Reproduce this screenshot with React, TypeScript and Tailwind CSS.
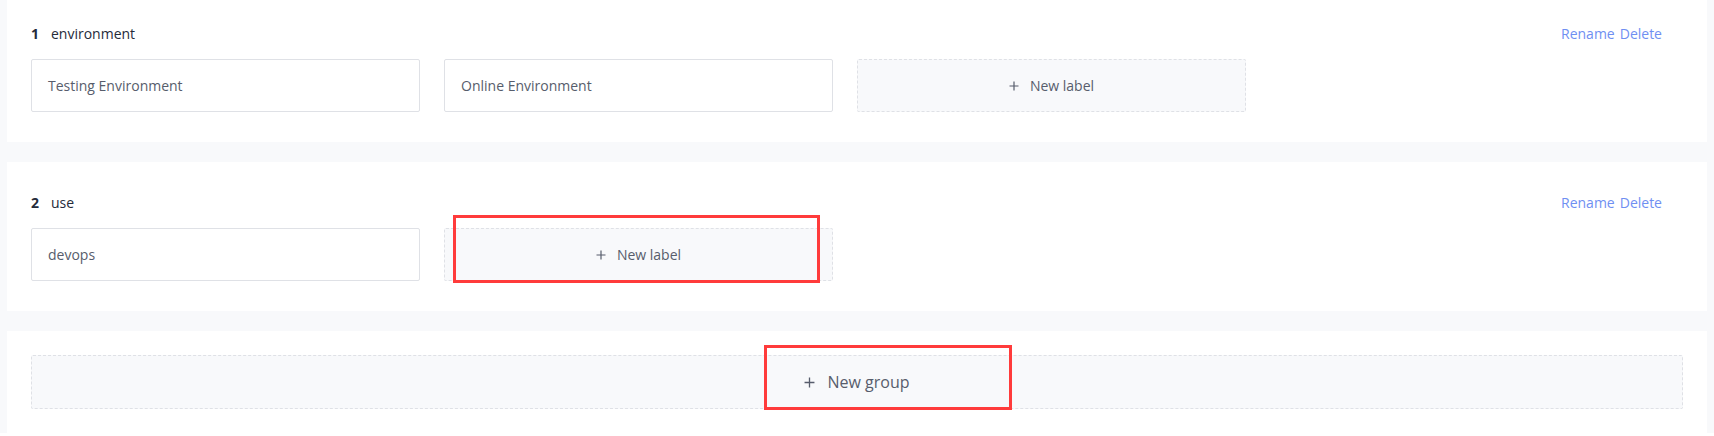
import type { ReactNode } from 'react'

interface TagGroup {
  index: number
  name: string
  labels: string[]
  highlightAdd?: boolean
}

const groups: TagGroup[] = [
  { index: 1, name: 'environment', labels: ['Testing Environment', 'Online Environment'] },
  { index: 2, name: 'use', labels: ['devops'], highlightAdd: true },
]

function PlusIcon({ size }: { size: number }) {
  return (
    <svg width={size} height={size} viewBox="0 0 10 10" fill="none" className="shrink-0">
      <path d="M5 0.5v9M0.5 5h9" stroke="#575d6c" strokeWidth="1.2" />
    </svg>
  )
}

// annotation frame drawn over the screenshot
function Highlight({ className }: { className: string }) {
  return <span className={`pointer-events-none absolute border-[3px] border-[#ff3b3b] ${className}`} />
}

function Card({ children, className = '' }: { children: ReactNode; className?: string }) {
  return <div className={`bg-white px-6 ${className}`}>{children}</div>
}

function GroupCard({ group }: { group: TagGroup }) {
  return (
    <Card className="pt-[30px] pb-[30px]">
      <div className="flex h-5 items-center justify-between pr-[21px]">
        <div className="flex items-center text-[14px] text-[#252b3a]">
          <span className="w-5 font-bold">{group.index}</span>
          <span>{group.name}</span>
        </div>
        <div className="flex items-center gap-[5px] text-[14px] text-[#6f8ff2]">
          <button type="button">Rename</button>
          <button type="button">Delete</button>
        </div>
      </div>
      <div className="mt-4 flex gap-6">
        {group.labels.map((label) => (
          <div
            key={label}
            className="flex h-[53px] w-[389px] items-center rounded-[2px] border border-[#dfe1e6] px-4 text-[14px] text-[#575d6c]"
          >
            {label}
          </div>
        ))}
        <button
          type="button"
          className="relative flex h-[53px] w-[389px] items-center justify-center gap-[11px] rounded-[2px] border border-dashed border-[#dfe1e6] bg-[#f8f9fb] text-[14px] text-[#575d6c]"
        >
          <PlusIcon size={10} />
          New label
          {group.highlightAdd && <Highlight className="top-[-14px] left-[8px] h-[68px] w-[367px]" />}
        </button>
      </div>
    </Card>
  )
}

export default function App() {
  return (
    <div
      className="min-h-screen bg-[#f8f9fb] px-[7px]"
      style={{ fontFamily: '"Open Sans", "Noto Sans", sans-serif' }}
    >
      <div className="-mt-[7px] flex flex-col gap-5">
        {groups.map((g) => (
          <GroupCard key={g.index} group={g} />
        ))}
        <Card className="py-6">
          <button
            type="button"
            className="relative flex h-[54px] w-full items-center justify-center gap-3 rounded-[2px] border border-dashed border-[#dfe1e6] bg-[#f8f9fb] text-[16px] text-[#575d6c]"
          >
            <PlusIcon size={11} />
            New group
            <Highlight className="top-[-11px] left-[732px] h-[65px] w-[248px]" />
          </button>
        </Card>
      </div>
    </div>
  )
}
